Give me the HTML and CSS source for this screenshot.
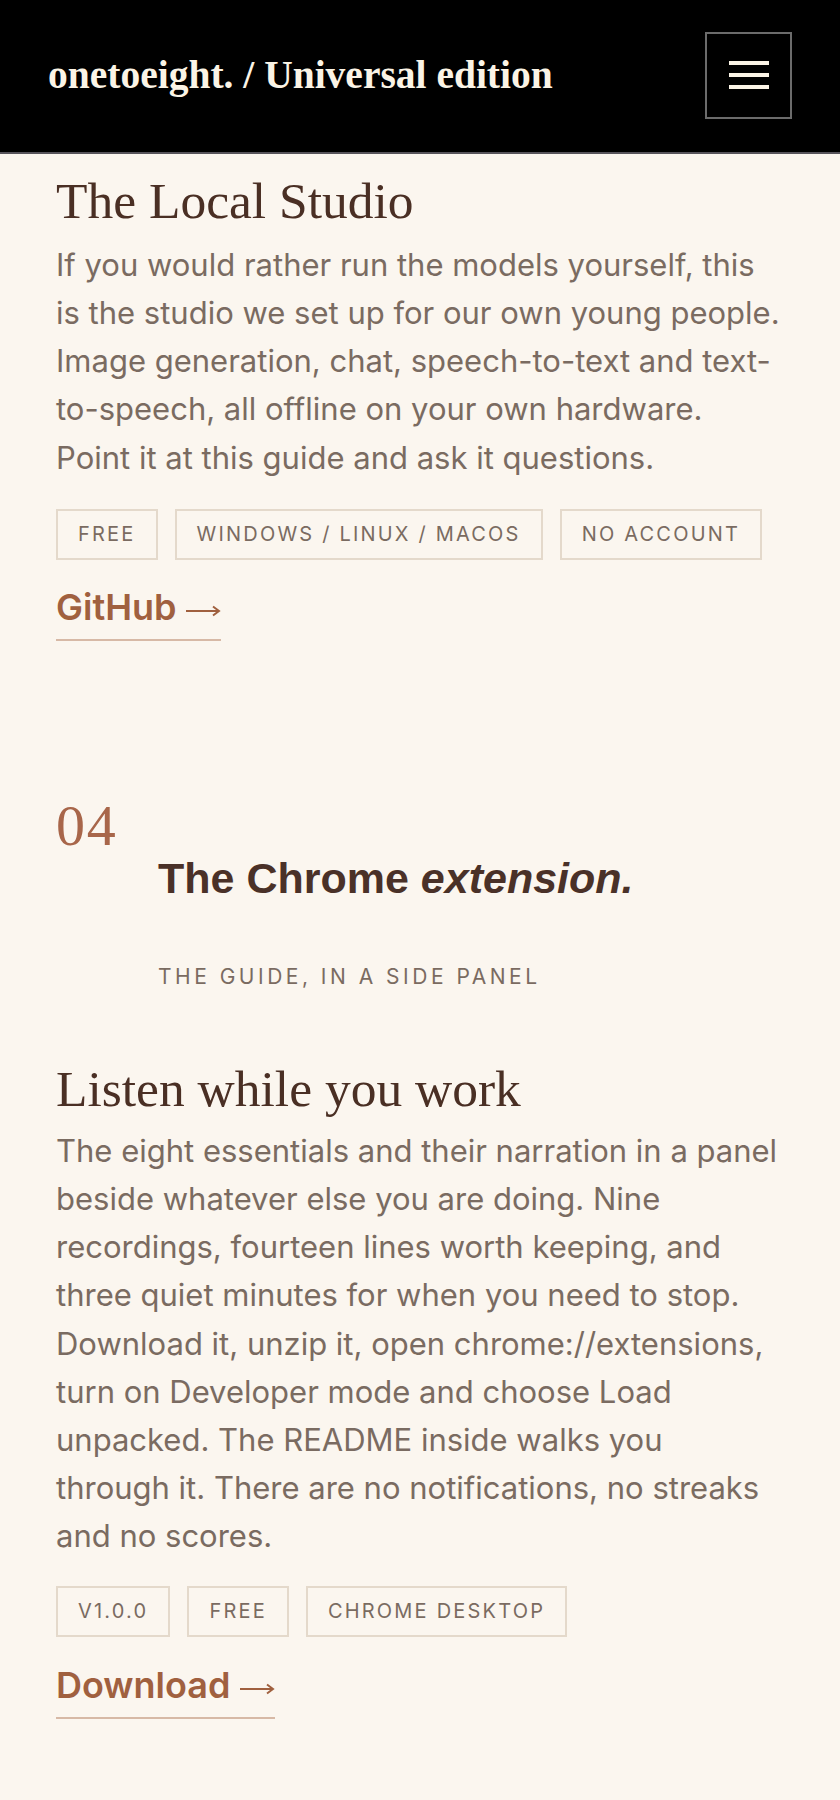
FILE: index.html
```html
<!DOCTYPE html>
<html lang="en">
<head>
<meta charset="utf-8">
<title>onetoeight. / Universal edition</title>
<link rel="stylesheet" href="styles.css">
</head>
<body>
<header class="topbar">
  <a class="brand" href="#">onetoeight. / Universal edition</a>
  <button class="menu" type="button" aria-label="Menu">
    <span class="menu-line"></span>
    <span class="menu-line"></span>
    <span class="menu-line"></span>
  </button>
</header>
<main class="page">
  <article class="item item-first">
    <h3 class="item-title">The Local Studio</h3>
    <p class="item-text">If you would rather run the models yourself, this is the studio we set up for our own young people. Image generation, chat, speech-to-text and text-to-speech, all offline on your own hardware. Point it at this guide and ask it questions.</p>
    <ul class="tags">
      <li class="tag">Free</li>
      <li class="tag">Windows / Linux / macOS</li>
      <li class="tag">No account</li>
    </ul>
    <a class="cta" href="#">GitHub <svg class="arrow" width="35" height="14" viewBox="0 0 35 14" aria-hidden="true"><path d="M0 7 H33 M27 2.5 L33 7 L27 11.5" fill="none" stroke="currentColor" stroke-width="2"/></svg></a>
  </article>

  <section class="section">
    <div class="section-num">04</div>
    <div class="section-titles">
      <h2 class="section-title">The Chrome <em>extension.</em></h2>
      <p class="eyebrow">The guide, in a side panel</p>
    </div>
    <article class="item">
      <h3 class="item-title">Listen while you work</h3>
      <p class="item-text">The eight essentials and their narration in a panel beside whatever else you are doing. Nine recordings, fourteen lines worth keeping, and three quiet minutes for when you need to stop. Download it, unzip it, open chrome://extensions, turn on Developer mode and choose Load unpacked. The README inside walks you through it. There are no notifications, no streaks and no scores.</p>
      <ul class="tags">
        <li class="tag">v1.0.0</li>
        <li class="tag">Free</li>
        <li class="tag">Chrome desktop</li>
      </ul>
      <a class="cta" href="#">Download <svg class="arrow" width="35" height="14" viewBox="0 0 35 14" aria-hidden="true"><path d="M0 7 H33 M27 2.5 L33 7 L27 11.5" fill="none" stroke="currentColor" stroke-width="2"/></svg></a>
    </article>
  </section>
</main>
</body>
</html>
```
FILE: styles.css
```css
* { box-sizing: border-box; }

html, body {
  margin: 0;
  padding: 0;
  background: #fbf6ef;
}

body {
  font-family: Inter, "Liberation Sans", Arial, sans-serif;
  color: #7a6b61;
  min-height: 1800px;
}

.topbar {
  height: 154px;
  background: #000;
  border-bottom: 2px solid #57545b;
  display: flex;
  align-items: center;
  justify-content: space-between;
  padding: 0 48px;
}

.brand {
  font-family: "Liberation Serif", "Times New Roman", serif;
  font-weight: 700;
  font-size: 39.5px;
  color: #fbf4e6;
  text-decoration: none;
  line-height: 1;
}

.menu {
  width: 87px;
  height: 87px;
  background: #000;
  border: 2px solid #6b6b6b;
  padding: 0;
  margin: 0 0 2px 0;
  display: flex;
  flex-direction: column;
  align-items: center;
  justify-content: center;
  gap: 8px;
  cursor: pointer;
}

.menu-line {
  display: block;
  width: 40px;
  height: 4px;
  background: #fbf4e6;
}

.page {
  padding: 0 56px 60px;
}

.item-first {
  padding-top: 16px;
}

.item-title {
  font-family: "Liberation Serif", "Times New Roman", serif;
  font-weight: 400;
  font-size: 51.5px;
  line-height: 1.2;
  color: #4a2f24;
  margin: 0;
}

.item-text {
  font-size: 31px;
  line-height: 48.2px;
  margin: 9px 0 0;
  color: #7a6b61;
}

.section .item-text {
  margin-top: 7px;
}

.tags {
  list-style: none;
  margin: 27px 0 0;
  padding: 0;
  display: flex;
  flex-wrap: wrap;
  gap: 17px;
}

.section .tags {
  margin-top: 25px;
}

.tag {
  height: 51px;
  display: flex;
  align-items: center;
  padding: 0 20px;
  border: 2px solid #e4d9cb;
  font-size: 20px;
  letter-spacing: 0.11em;
  text-transform: uppercase;
  color: #7a6b61;
}

.cta {
  display: inline-block;
  margin-top: 26px;
  font-size: 36px;
  font-weight: 600;
  line-height: 1.2;
  color: #a0603f;
  text-decoration: none;
  padding-bottom: 10px;
  border-bottom: 2px solid #d7b9a6;
}

.arrow {
  display: inline-block;
  vertical-align: 2px;
}

.section {
  margin-top: 158px;
}

.section-num {
  font-family: "Liberation Serif", "Times New Roman", serif;
  font-size: 58px;
  line-height: 54px;
  letter-spacing: 0.03em;
  color: #a8664a;
}

.section-titles {
  padding-left: 102px;
}

.section-title {
  font-family: "Liberation Sans", Arial, sans-serif;
  font-weight: 700;
  font-size: 43px;
  line-height: 1.2;
  color: #4a3128;
  margin: 0;
}

.section-title em {
  font-style: italic;
}

.eyebrow {
  margin: 57px 0 0;
  font-size: 21px;
  line-height: 1.4;
  letter-spacing: 3.5px;
  text-transform: uppercase;
  color: #7a6b61;
}

.section .item {
  margin-top: 67px;
}

.section .cta {
  margin-top: 27px;
}
```
